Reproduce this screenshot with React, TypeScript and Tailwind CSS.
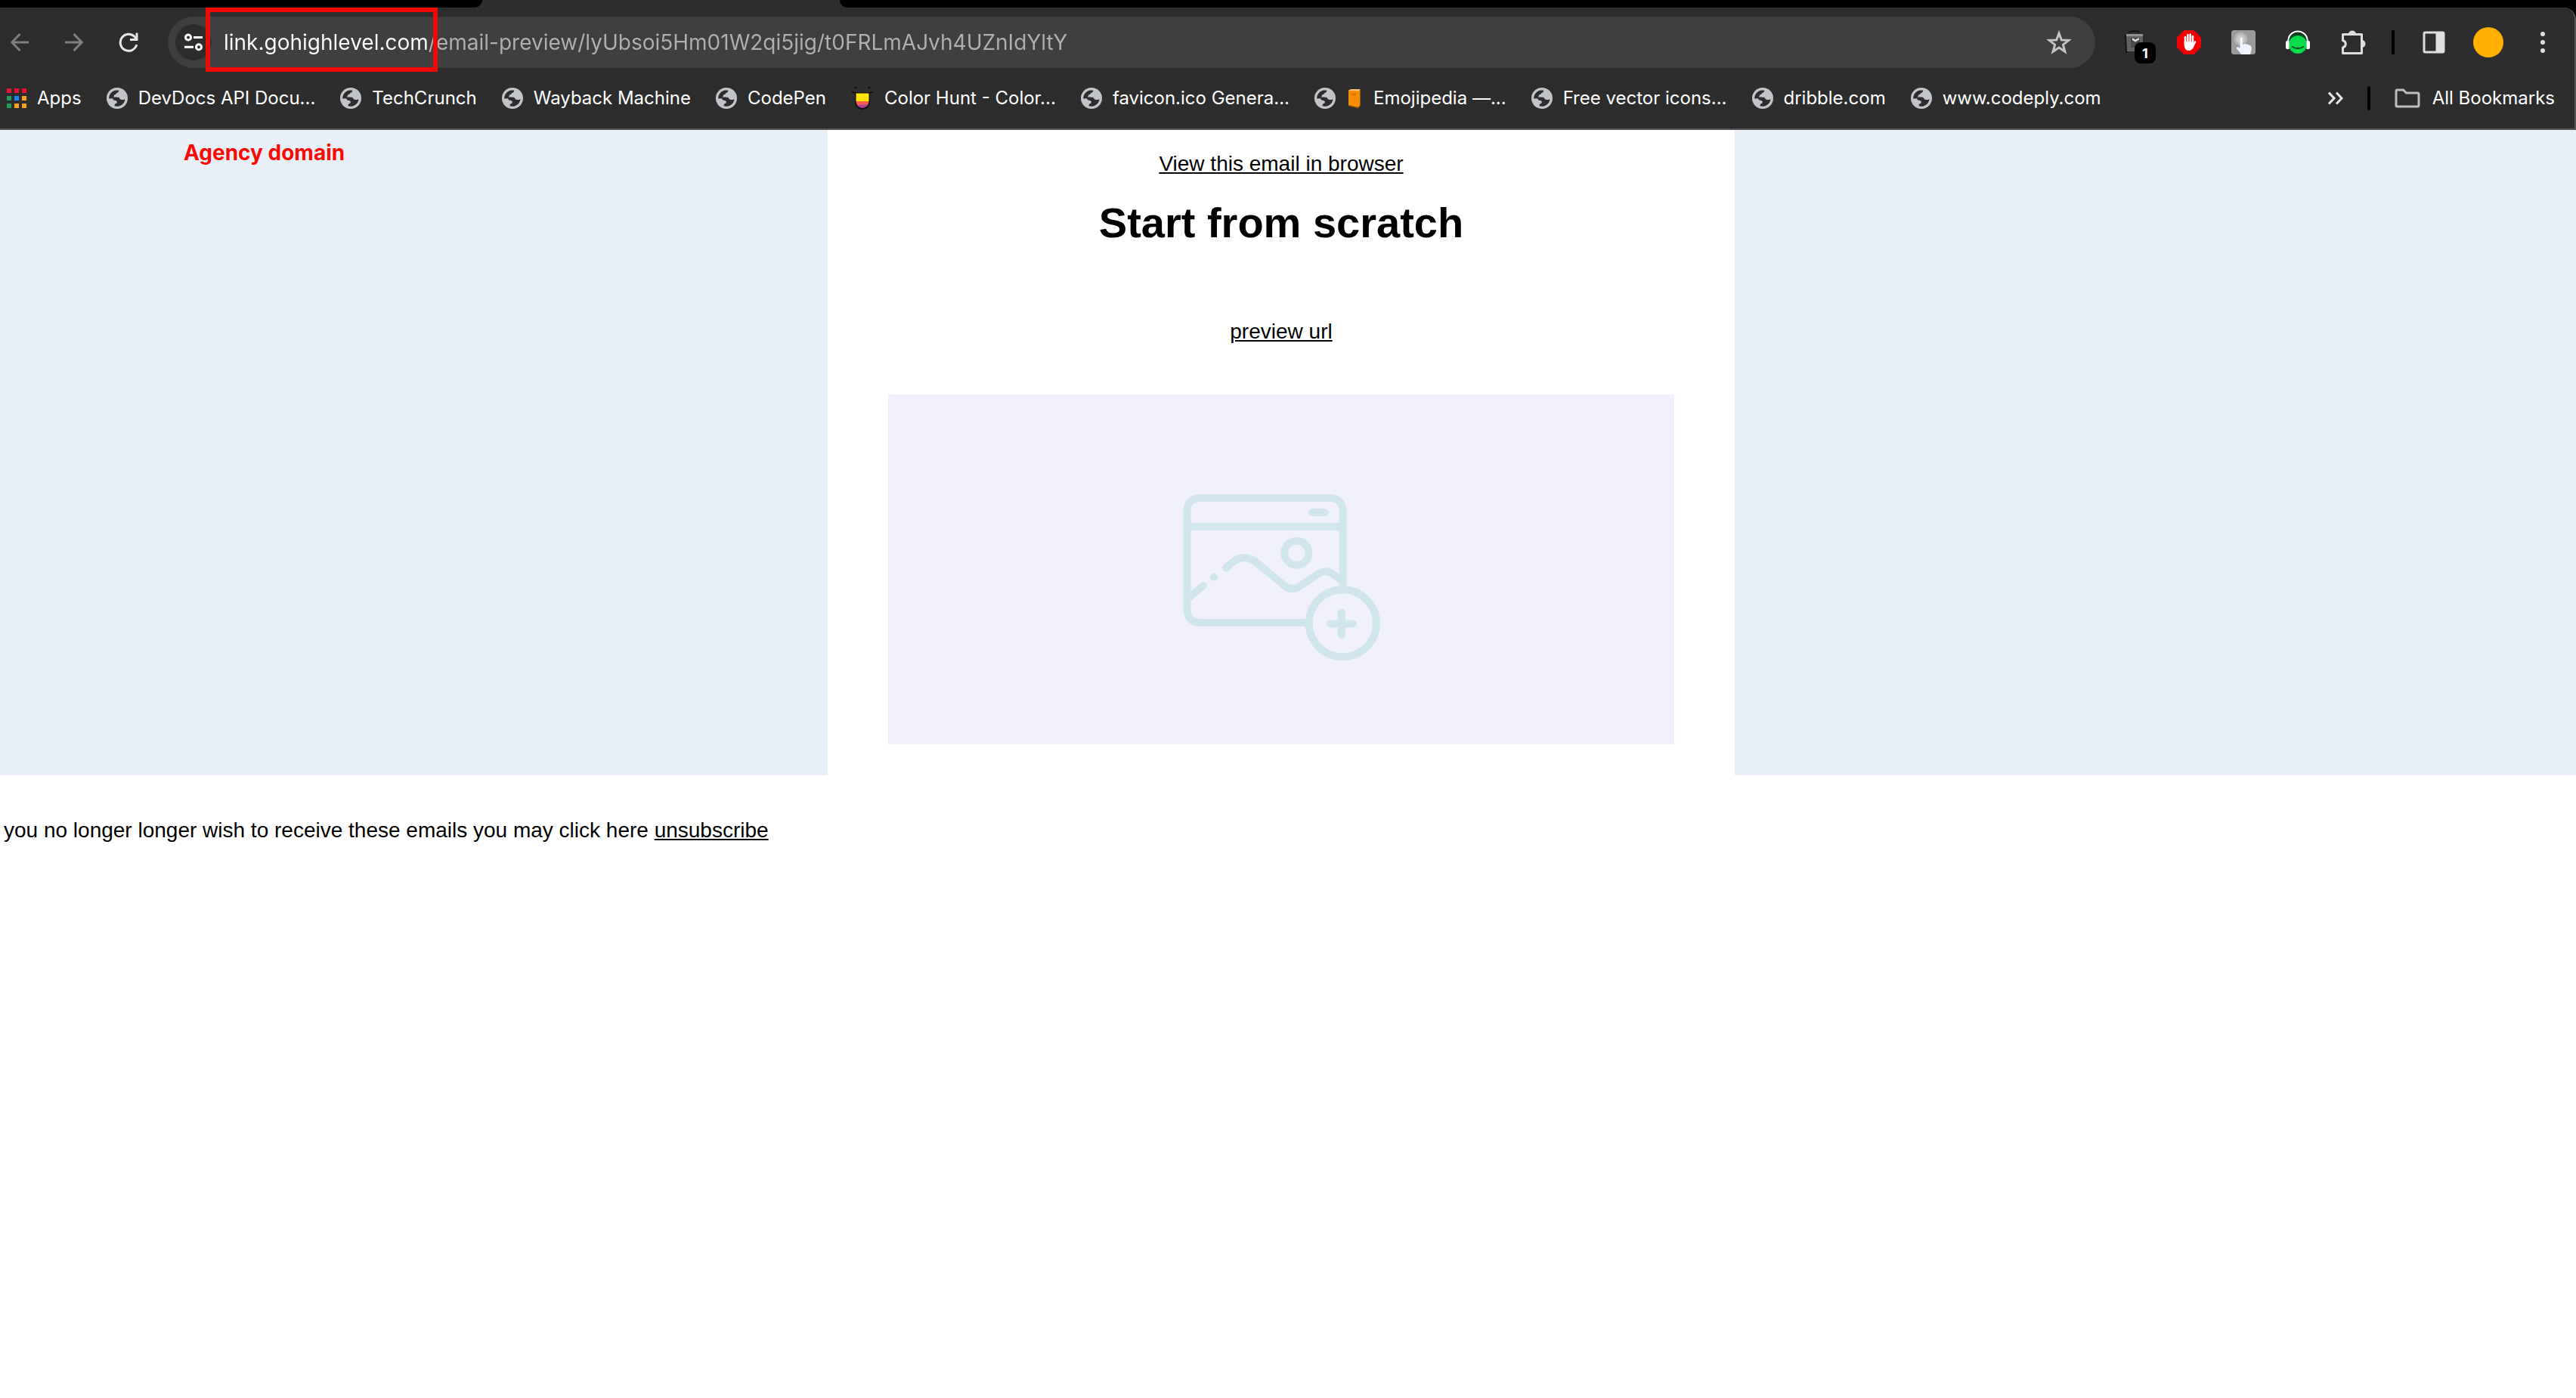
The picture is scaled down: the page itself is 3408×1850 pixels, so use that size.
import type { ReactNode } from "react";

const URL_TEXT =
  "link.gohighlevel.com/email-preview/lyUbsoi5Hm01W2qi5jig/t0FRLmAJvh4UZnIdYltY";

function Globe() {
  return (
    <svg viewBox="0 0 28 28" className="size-7 shrink-0" aria-hidden="true">
      <circle cx="14" cy="14" r="14" fill="#c1c5ca" />
      <path
        d="M3.2 14.6C3 9.4 6.6 4.6 12 3.6c1.800-.3 3.300-.2 4.300.1-.2 2-1.200 3-3.100 3.400-.4 1.900-1.700 2.300-3.300 2.300.2 1.600-.3 2.500-1.500 3 2.500.1 5.500-.1 7.500.4 1.300.4 1.200 2.100 2.300 2.800 1.400.9 4.300.4 6.300-.4-.5 4.200-3.400 7.900-7.700 9.200-2.500.6-4.700.5-6.300-.1 0-2.200.8-3.200 3-3.500.3-1.800.4-3-.9-3.600-1.300-.6-2.900-.2-3.700-1.300-.6-.8-.5-1.600-1.300-1.700-1.500-.1-3 .2-4.400.4Z"
        fill="#2d2d2d"
      />
    </svg>
  );
}

function AppsGrid() {
  const cells = [
    "#ee1133", "#ee1133", "#ee1133",
    "#1f9d55", "#1a86f0", "#f9a11b",
    "#1f9d55", "#f9a11b", "#f9a11b",
  ];
  return (
    <span className="grid shrink-0 grid-cols-3 gap-1" aria-hidden="true">
      {cells.map((c, i) => (
        <span key={i} className="size-[6px]" style={{ backgroundColor: c }} />
      ))}
    </span>
  );
}

function ColorHunt() {
  return (
    <svg viewBox="0 0 30 32" className="h-8 w-[30px] shrink-0" aria-hidden="true">
      <circle cx="6" cy="2" r="1.500" fill="#111" />
      <circle cx="24" cy="2" r="1.500" fill="#111" />
      <path d="M1 7.500c4 2.500 24 2.500 28 0" fill="none" stroke="#111" strokeWidth="2" />
      <clipPath id="tongue">
        <path d="M6.500 9.500h17V20a8.500 9 0 0 1-17 0Z" />
      </clipPath>
      <path d="M5 9h20v11.500a10 10.500 0 0 1-20 0Z" fill="#111" />
      <g clipPath="url(#tongue)">
        <path d="M5 9h20v11H5Z" fill="#ffe600" />
        <path d="M5 20h20v6H5Z" fill="#fb5c56" />
        <path d="m5 25 20-1v6H5Z" fill="#b0409a" />
      </g>
    </svg>
  );
}

function OrangeBook() {
  return (
    <svg viewBox="0 0 18 26" className="mx-[2px] h-[26px] w-[18px] shrink-0" aria-hidden="true">
      <path d="M1 2.500 5 1h11.500v21.500l-3 2.500L1 22Z" fill="#f48c06" />
      <path d="M1 2.500 5 1h11.500l-2.500 2.500Z" fill="#f9c583" />
      <path d="m1 22 12.500 3 3-2.500v1L13.500 26 1 23Z" fill="#b96208" />
      <path d="M5 6.500h6v2.200L8.500 10 5 8.700Z" fill="#e07400" />
    </svg>
  );
}

type Bookmark = { label: string; icon: ReactNode; extra?: ReactNode };

const bookmarks: Bookmark[] = [
  { label: "Apps", icon: <AppsGrid /> },
  { label: "DevDocs API Docu...", icon: <Globe /> },
  { label: "TechCrunch", icon: <Globe /> },
  { label: "Wayback Machine", icon: <Globe /> },
  { label: "CodePen", icon: <Globe /> },
  { label: "Color Hunt - Color...", icon: <ColorHunt /> },
  { label: "favicon.ico Genera...", icon: <Globe /> },
  { label: "Emojipedia —...", icon: <Globe />, extra: <OrangeBook /> },
  { label: "Free vector icons...", icon: <Globe /> },
  { label: "dribble.com", icon: <Globe /> },
  { label: "www.codeply.com", icon: <Globe /> },
];

function Slot({ label, children }: { label: string; children: ReactNode }) {
  return (
    <button
      type="button"
      aria-label={label}
      className="relative flex h-[68px] w-[72px] shrink-0 items-center justify-center"
    >
      {children}
    </button>
  );
}

function TabStrip() {
  return (
    <div className="flex h-[10px] justify-between bg-[#2d2d2d]">
      <div className="w-[638px] rounded-br-[16px] bg-black" />
      <div className="ml-[473px] flex-1 rounded-bl-[16px] bg-black" />
    </div>
  );
}

function Toolbar() {
  return (
    <div className="flex items-center pt-3 pr-[6px]">
      <div className="-ml-[10px] flex">
        <Slot label="Back">
          <svg viewBox="0 0 24 24" className="size-6" fill="none" stroke="#7f7f7f" strokeWidth="3">
            <path d="M24 12H2M12.500 1 1.800 12l10.700 11" />
          </svg>
        </Slot>
        <Slot label="Forward">
          <svg viewBox="0 0 24 24" className="size-6" fill="none" stroke="#7f7f7f" strokeWidth="3">
            <path d="M0 12h22M11.500 1l10.700 11-10.700 11" />
          </svg>
        </Slot>
        <Slot label="Reload">
          <svg viewBox="0 0 26 26" className="size-[26px]" fill="none" stroke="#e6e6e6" strokeWidth="3">
            <path d="M23.800 16.200A11 11 0 1 1 21 5.500l3 3.500" />
            <path d="M24 .500V9.500H15" />
          </svg>
        </Slot>
      </div>

      <div className="relative ml-4 flex h-[68px] flex-1 items-center rounded-full bg-[#3f3f3f] pr-6 pl-[10px]">
        <button
          type="button"
          aria-label="View site information"
          className="flex size-12 shrink-0 items-center justify-center rounded-full bg-[#2d2d2d]"
        >
          <svg viewBox="0 0 24 24" className="size-6" fill="none" stroke="#fff" strokeWidth="3">
            <circle cx="5" cy="5.500" r="3.500" />
            <path d="M12 5.500h12M0 18.200h12" />
            <circle cx="19" cy="18.200" r="3.500" />
          </svg>
        </button>
        <input
          type="text"
          aria-label="Address and search bar"
          defaultValue={URL_TEXT}
          className="ml-4 h-12 min-w-0 flex-1 bg-[linear-gradient(to_right,#ffffff_270px,#b0b0b0_270px)] bg-clip-text text-[28px] text-transparent outline-none"
        />
        <button type="button" aria-label="Bookmark this tab" className="flex size-12 items-center justify-center">
          <svg viewBox="0 0 34 34" className="size-[34px]" fill="none" stroke="#c4c4c4" strokeWidth="3">
            <path d="m17 5 3.300 8.900 9.500.4-7.400 5.900 2.500 9.100L17 24.100l-7.900 5.200 2.500-9.100-7.400-5.900 9.500-.4Z" />
          </svg>
        </button>
        <div className="pointer-events-none absolute -top-3 left-[50px] h-[85px] w-[307px] border-[6px] border-[#ee0a00]" />
      </div>

      <div className="ml-4 flex items-center">
        <Slot label="Camera extension, 1 item">
          <svg viewBox="0 0 28 32" className="size-8">
            <path d="M7 3.500c0-3 13-3 13 0" fill="none" stroke="#111" strokeWidth="2" />
            <path d="M1 6h4v24H2Z" fill="#161616" />
            <path d="M3 6h22v22H4Z" fill="#626262" />
            <path d="M3 5h22v3H3Z" fill="#8f8f8f" />
            <path d="M9 10h12v13H9Z" fill="#4a4a4a" />
            <path d="m11 10 4 2.500 5-2.500v2.500l-5 3-4-2.500Z" fill="#dcdcdc" />
          </svg>
          <span className="absolute top-[34px] left-9 flex size-7 items-center justify-center rounded-lg bg-black text-[18px] font-bold text-white">
            1
          </span>
        </Slot>
        <Slot label="Ad blocker">
          <svg viewBox="0 0 32 32" className="size-8">
            <path d="M9.500 0h13L32 9.500v13L22.500 32h-13L0 22.500v-13Z" fill="#f40000" />
            <g stroke="#fff" strokeWidth="2.600" strokeLinecap="round">
              <path d="M11 9V18M14.300 6v12M17.700 5.500V18M21 8v10" />
              <path d="m24 15.500-4 8" />
            </g>
            <path d="M9.700 15h12.600c0 3 0 5-1.300 8-1.200 2.500-2.500 4-4.800 4-4.500 0-6.500-3.500-6.500-7.500Z" fill="#fff" />
          </svg>
        </Slot>
        <Slot label="Click helper">
          <svg viewBox="0 0 32 32" className="size-8">
            <rect width="32" height="32" rx="3.500" fill="#9a9a9a" />
            <circle cx="12.500" cy="11.500" r="9" fill="#b2b2b2" />
            <circle cx="12.500" cy="11.500" r="6" fill="#c8c8c8" />
            <path
              d="M11.500 11c0-2.500 3.500-2.500 3.500 0v8l3-1c1-.3 1.800.2 2 1 1.500-.8 2.500-.3 3 .7 1.500-.3 3.700.8 3.700 3.300 0 4-.7 6-1.700 9H13c-1.500-3-4-5-6-7.500-.8-1.300 1-3 2.500-2l2 1.500Z"
              fill="#eef4fd"
            />
          </svg>
        </Slot>
        <Slot label="Headphones extension">
          <svg viewBox="0 0 32 32" className="size-8">
            <path d="M4 14a12 11 0 0 1 24 0" fill="#0d3f24" />
            <circle cx="16" cy="19" r="12" fill="#07dd4b" />
            <path d="M3 16C3-3.500 29-3.500 29 16" fill="none" stroke="#fff" strokeWidth="2" />
            <path d="M2 14h2.500v11H2a2 2 0 0 1-2-2v-7a2 2 0 0 1 2-2ZM30 14h-2.500v11H30a2 2 0 0 0 2-2v-7a2 2 0 0 0-2-2Z" fill="#fff" />
            <path d="M8 21.500c4.500 3.200 11.500 3.200 16 0" fill="none" stroke="#0d4a22" strokeWidth="2" />
          </svg>
        </Slot>
        <Slot label="Extensions">
          <svg viewBox="0 0 36 36" className="size-9">
            <path
              d="M5.500 7.500h25v25h-25v-7.500c5-1.500 5-8 0-9.500Z"
              fill="none"
              stroke="#dedede"
              strokeWidth="3"
              strokeLinejoin="round"
            />
            <path d="M13 7a5 4.500 0 0 1 10 0ZM31 15a4.500 5 0 0 1 0 10Z" fill="#dedede" />
          </svg>
        </Slot>
        <span className="mx-4 h-8 w-1 bg-black" />
        <Slot label="Side panel">
          <svg viewBox="0 0 30 30" className="size-[30px]">
            <rect x="2" y="2" width="26" height="26" rx="1.500" fill="none" stroke="#dedede" strokeWidth="3" />
            <path d="M17.500 2H28v26H17.500Z" fill="#dedede" />
          </svg>
        </Slot>
        <Slot label="Profile">
          <span className="size-10 rounded-full bg-[#ffb000]" />
        </Slot>
        <Slot label="Menu">
          <svg viewBox="0 0 8 30" className="h-[30px] w-2" fill="#dedede">
            <circle cx="4" cy="4" r="3" />
            <circle cx="4" cy="15" r="3" />
            <circle cx="4" cy="26" r="3" />
          </svg>
        </Slot>
      </div>
    </div>
  );
}

function BookmarksBar() {
  return (
    <nav className="flex h-20 items-center pr-[26px] pl-[9px] text-2xl text-white" aria-label="Bookmarks">
      <ul className="flex items-center gap-[33px]">
        {bookmarks.map((b) => (
          <li key={b.label}>
            <a href="#" className="flex items-center gap-[14px] whitespace-nowrap">
              {b.icon}
              {b.extra}
              <span>{b.label}</span>
            </a>
          </li>
        ))}
      </ul>
      <div className="ml-auto flex items-center">
        <button type="button" aria-label="More bookmarks">
          <svg viewBox="0 0 20 18" className="h-[18px] w-5" fill="none" stroke="#e6e6e6" strokeWidth="3">
            <path d="m1 1.500 7 7.500-7 7.500M11 1.500 18 9l-7 7.500" />
          </svg>
        </button>
        <span className="mx-8 h-8 w-1 rounded-full bg-black" />
        <button type="button" className="flex items-center gap-4 whitespace-nowrap">
          <svg viewBox="0 0 34 26" className="h-[26px] w-[34px]" fill="none" stroke="#bdbdbd" strokeWidth="3">
            <path d="M3.500 2h8l4 4h15a1.500 1.500 0 0 1 1.500 1.500v15a1.500 1.500 0 0 1-1.500 1.500h-27A1.500 1.500 0 0 1 2 22.500v-19A1.500 1.500 0 0 1 3.500 2Z" />
          </svg>
          All Bookmarks
        </button>
      </div>
    </nav>
  );
}

function ImagePlaceholder() {
  return (
    <div className="flex h-[463px] items-center justify-center bg-[#f0f0fb] pt-5">
      <svg
        viewBox="0 0 261 222"
        className="h-[222px] w-[261px]"
        fill="none"
        stroke="#d1e5ed"
        strokeWidth="10"
        role="img"
        aria-label="Add image"
      >
        <path d="M211.500 122V22a16 16 0 0 0-16-16h-174a16 16 0 0 0-16 16v133a16 16 0 0 0 16 16H163" />
        <path d="M5 43.700h207" />
        <path d="M171 25h17M41.300 110.700h.01M26.700 122 9 137" strokeLinecap="round" />
        <circle cx="150.300" cy="78.700" r="16" />
        <path
          d="M57 98.700l7.500-6.700c11-9.500 23-9 33.500 0l37 30.500c6 4.700 13 4.700 20 0l24-16c7-4.700 13-4.500 20 .5l10 7"
          strokeLinecap="round"
        />
        <circle cx="211.300" cy="171.700" r="44.500" />
        <path d="M210 157.500v30M195 172.500h30" strokeLinecap="round" />
      </svg>
    </div>
  );
}

export default function App() {
  return (
    <div className="min-h-screen bg-white font-['Inter',sans-serif]">
      <header className="bg-black">
        <TabStrip />
        <div className="rounded-tr-[16px] border-r-2 border-b-2 border-[#555555] bg-[#2d2d2d]">
          <Toolbar />
          <BookmarksBar />
        </div>
      </header>

      <main className="relative font-['Liberation_Sans',Arial,sans-serif] text-[28px] leading-8 text-black">
        <p className="absolute top-[14px] left-[243px] font-['Inter',sans-serif] font-bold text-[#f90b05]">
          Agency domain
        </p>
        <section className="bg-[#e8eff7] pr-[18px]">
          <div className="mx-auto max-w-[1200px] bg-white px-20 pt-[29px] pb-[41px] text-center">
            <a href="#" className="block underline">
              View this email in browser
            </a>
            <h1 className="mt-[30px] text-[56px] leading-[64px] font-bold">Start from scratch</h1>
            <a href="#" className="mt-24 mb-[67px] block underline">
              preview url
            </a>
            <ImagePlaceholder />
          </div>
        </section>
        <p className="mt-[57px] pl-[5px]">
          you no longer longer wish to receive these emails you may click here{" "}
          <a href="#" className="underline">
            unsubscribe
          </a>
        </p>
      </main>
    </div>
  );
}
